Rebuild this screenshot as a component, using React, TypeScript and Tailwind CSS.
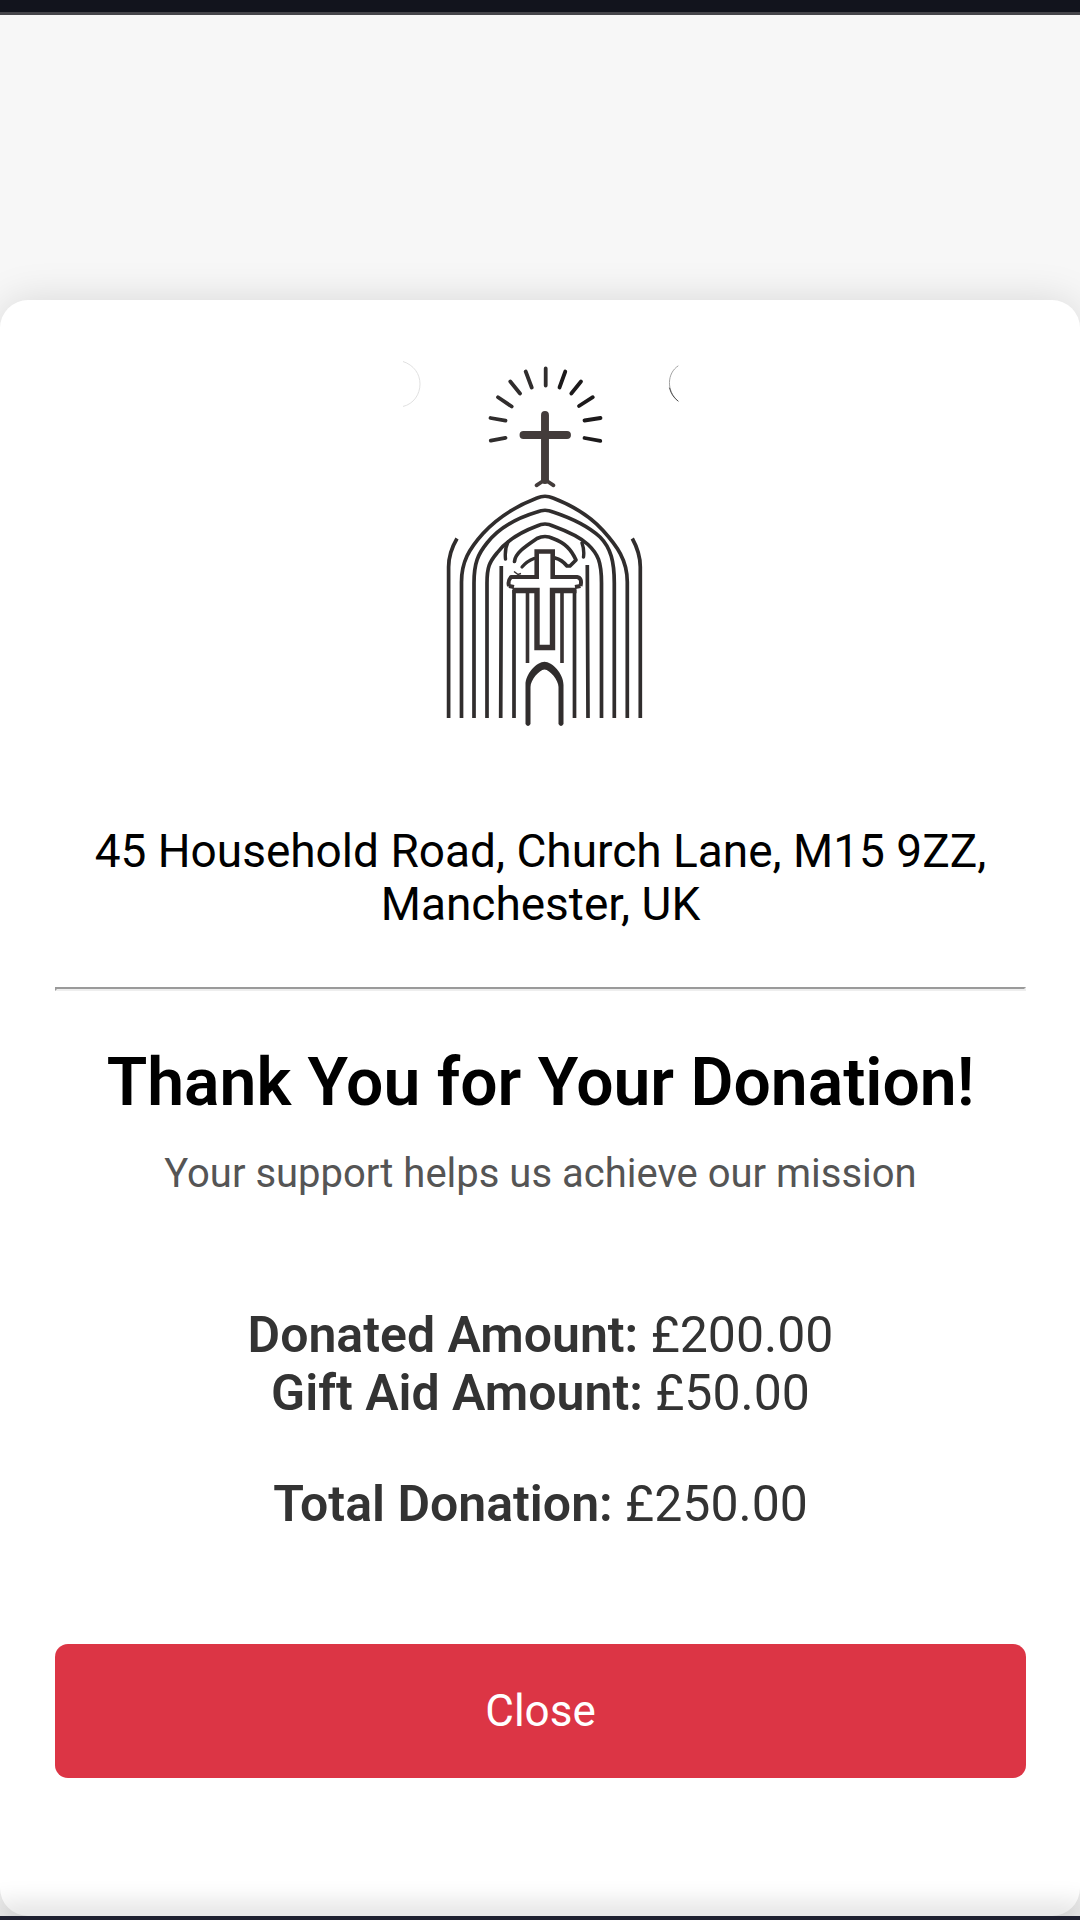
import React, { useState } from "react";

// Church logo shown at the top of the receipt card
function ChurchLogo() {
  return (
    <svg
      viewBox="403 355 276 412"
      className="block w-[276px] h-[412px] mx-auto"
      fill="none"
      stroke="#302d2d"
      strokeWidth="3.7"
      strokeLinecap="round"
      strokeLinejoin="round"
      role="img"
      aria-label="Church logo"
    >
      {/* Corner arcs */}
      <path d="M403 361.500C414 365 420 374 420 384S414 404 403 406.500" stroke="#dcdcdc" strokeWidth="0.900" />
      <path d="M678 366C667 373 666 391 678 401" stroke="#999" strokeWidth="0.900" />
      <path d="M669.500 388C671 394 674 398 678 401" stroke="#444" strokeWidth="0.900" />

      {/* Rays */}
      <g strokeWidth="3.800">
        <path d="M545.700 368.500V385.500M525.700 371.500L531.700 387.500M510.300 381.500L520 393.500M498 397.200L511.700 406.500M490.500 418L505.500 420.700M490.800 440.700L505.500 437.800" />
        <path
          d="M565.300 371.500L559.500 387.500M581 381.500L571.300 393.500M592.800 397.200L579 406M600.500 418L584.500 420.500M600.300 440.800L584.500 438"
          stroke="#1c1a1b"
        />
      </g>

      {/* Top cross */}
      <g stroke="#433c3b">
        <path d="M545 415V480M523.500 435H567" strokeWidth="7.900" />
        <path d="M536.500 485.300L543 481H547L553.500 485.300" strokeWidth="3.800" />
      </g>

      {/* Arches */}
      <g strokeLinecap="butt">
        <path d="M461.500 718V582C461.500 562 469 549 483 533.500C498 517 519 505 537 498Q545 494.500 553 498C571 505 590 516 603 530.500C617 546 627.300 560 627.300 582V718" />
        <path d="M474 718V583C474 563 478 554 487 543C498 529 517 518 537 512Q545 508.500 553 512C571 518 587 525 600 537C611 548 614.300 562 614.300 583V718" />
        <path d="M487 718V583C487 567 489.500 562 497 553C506 541 521 532 537 526Q545 522 553 526C568 531.500 580 537 588 544.500C598 554 601.500 562 601.500 583V718" />
        <path d="M457 538.500C452 547 448.600 555 448.600 567V718M632.300 538.500C637 547 640.300 555 640.300 567V718" />
        <path d="M501.300 566L500.700 718M587.300 565L588 718" />
        <path d="M514 590V718M574.500 590V718" />
      </g>

      {/* Small hooks beside the inner arch */}
      <path d="M508 542Q504.500 549 505.500 559M582 543Q584.500 550 583.500 557" strokeWidth="3.400" />
      <path d="M514.500 561.500C515 553 526 546 537 538.500Q545 534.500 553 538.500C565 543 571 549 576 560L570 566H567C563 561 559 559 555 558" />
      <path d="M522 567Q527 561 534 558.500" strokeWidth="3.200" />

      {/* Inner cross */}
      <g stroke="#373131" strokeLinecap="butt" strokeLinejoin="miter">
        <path d="M535 577H511Q507.500 581 509 586M554 577H577Q582.500 578 580.500 586M509 586L514 587M580.500 586L575 587" strokeWidth="4" strokeLinejoin="round" />
        <path d="M514 571.500L518 574.500L521 573.500" strokeWidth="1.500" />
        <path d="M536.700 579V551.500H552.700V579" strokeWidth="4.600" />
        <path d="M512.500 590.500H537V647.500H552.500V590.500H576.500" strokeWidth="5.400" />
        <path d="M527.500 590V663M562 590V663" strokeWidth="3.600" />
      </g>

      {/* Door */}
      <path
        d="M525.500 724V685C525.500 673 537 662 544.500 661.700C552 662 563.500 673 563.500 685V724Q561 728 558.500 724V687C558.500 680 550 670 544.500 669.500C539 670 530.500 680 530.500 687V724Q528 728 525.500 724Z"
        fill="#302d2d"
        stroke="none"
      />
    </svg>
  );
}

const amounts = [
  { label: "Donated Amount:", value: "£200.00" },
  { label: "Gift Aid Amount:", value: "£50.00" },
];

export default function App() {
  const [open, setOpen] = useState(true);

  return (
    <div className="min-h-screen flex flex-col bg-[#f7f7f7] font-[Roboto,sans-serif]">
      {/* Top frame */}
      <header className="h-[15px] shrink-0 bg-[#12141d] border-b-3 border-[#45454a]" />

      <main className="grow flex flex-col pt-[285px]">
        {open && (
          <section className="grow rounded-[28px] bg-white pl-[55px] pr-[54px] pt-[55px] text-center shadow-[0_0_40px_rgba(0,0,0,0.13)]">
            <ChurchLogo />

            <p className="mt-[58px] text-[46px] leading-[53px] text-black">
              45 Household Road, Church Lane, M15 9ZZ, Manchester, UK
            </p>

            <hr className="mt-[56px] h-1 border-2 border-t-[#9a9a9a] border-l-[#9a9a9a] border-r-[#eeeeee] border-b-[#eeeeee]" />

            <h1 className="mt-[52px] text-[66px] leading-[80px] font-semibold text-black">
              Thank You for Your Donation!
            </h1>
            <p className="mt-[27px] text-[40px] leading-[48px] text-[#555555]">
              Your support helps us achieve our mission
            </p>

            {/* Donation summary */}
            <div className="mt-[108px] text-[50px] leading-[58px] text-[#333333]">
              {amounts.map((item) => (
                <p key={item.label}>
                  <strong className="font-semibold">{item.label}</strong> {item.value}
                </p>
              ))}
              <p className="mt-[53px]">
                <strong className="font-semibold">Total Donation:</strong> £250.00
              </p>
            </div>

            <button
              type="button"
              onClick={() => setOpen(false)}
              className="mt-[111px] w-full h-[134px] rounded-[13px] bg-[#dc3545] text-[44px] text-white"
            >
              Close
            </button>
          </section>
        )}
      </main>

      {/* Bottom frame */}
      <footer className="relative h-1 shrink-0 bg-[#1e2030] shadow-[0_-2px_28px_6px_rgba(0,0,0,0.2)]" />
    </div>
  );
}
